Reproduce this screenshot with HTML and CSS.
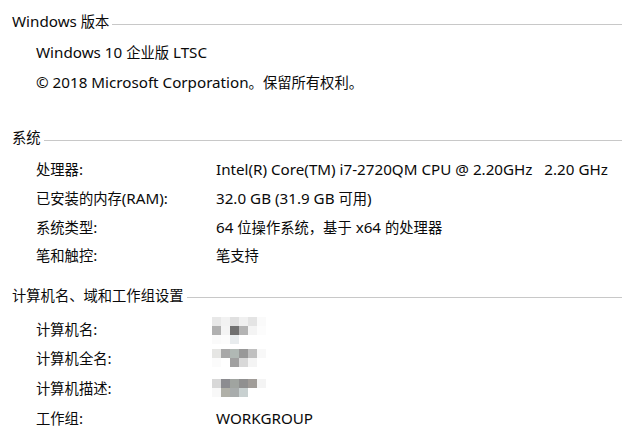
FILE: index.html
```html
<!DOCTYPE html>
<html lang="zh-CN">
<head>
<meta charset="utf-8">
<title>系统</title>
<link rel="stylesheet" href="styles.css">
</head>
<body>
<main class="page">
  <section class="group g1">
    <div class="group-head"><span class="group-title">Windows <span class="c">版本</span></span><span class="rule"></span></div>
    <div class="rows">
      <div class="row"><span class="label wide">Windows 10 <span class="c">企业版</span> LTSC</span></div>
      <div class="row"><span class="label wide">© 2018 Microsoft Corporation<span class="c">。保留所有权利。</span></span></div>
    </div>
  </section>
  <section class="group g2">
    <div class="group-head"><span class="group-title"><span class="c">系统</span></span><span class="rule"></span></div>
    <div class="rows">
      <div class="row"><span class="label"><span class="c">处理器</span>:</span><span class="value">Intel(R) Core(TM) i7-2720QM CPU @ 2.20GHz&nbsp;&nbsp;&nbsp;2.20 GHz</span></div>
      <div class="row"><span class="label"><span class="c">已安装的内存</span>(RAM):</span><span class="value">32.0 GB (31.9 GB <span class="c">可用</span>)</span></div>
      <div class="row"><span class="label"><span class="c">系统类型</span>:</span><span class="value">64 <span class="c">位操作系统，基于</span> x64 <span class="c">的处理器</span></span></div>
      <div class="row"><span class="label"><span class="c">笔和触控</span>:</span><span class="value"><span class="c">笔支持</span></span></div>
    </div>
  </section>
  <section class="group g3">
    <div class="group-head"><span class="group-title"><span class="c">计算机名、域和工作组设置</span></span><span class="rule"></span></div>
    <div class="rows">
      <div class="row"><span class="label"><span class="c">计算机名</span>:</span><span class="value">
        <svg class="mosaic m1" width="54" height="27" viewBox="0 0 6 3" shape-rendering="crispEdges">
          <rect x="0" y="0" width="1" height="1" fill="#e8e8e8"/><rect x="1" y="0" width="1" height="1" fill="#f2f2f2"/><rect x="2" y="0" width="1" height="1" fill="#e0e0e0"/><rect x="3" y="0" width="1" height="1" fill="#f0f0f0"/><rect x="4" y="0" width="1" height="1" fill="#e4e4e4"/><rect x="5" y="0" width="1" height="1" fill="#fafafa"/>
          <rect x="0" y="1" width="1" height="1" fill="#b0b0b0"/><rect x="1" y="1" width="1" height="1" fill="#f4f4f4"/><rect x="2" y="1" width="1" height="1" fill="#707070"/><rect x="3" y="1" width="1" height="1" fill="#b4b4b4"/><rect x="4" y="1" width="1" height="1" fill="#f4f4f4"/><rect x="5" y="1" width="1" height="1" fill="#fcfcfc"/>
          <rect x="0" y="2" width="1" height="1" fill="#fafafa"/><rect x="1" y="2" width="1" height="1" fill="#fcfcfc"/><rect x="2" y="2" width="1" height="1" fill="#e8ecee"/>
        </svg></span></div>
      <div class="row"><span class="label"><span class="c">计算机全名</span>:</span><span class="value">
        <svg class="mosaic m2" width="54" height="18" viewBox="0 0 6 2" shape-rendering="crispEdges">
          <rect x="0" y="0" width="1" height="1" fill="#e6e6e4"/><rect x="1" y="0" width="1" height="1" fill="#a8a8a8"/><rect x="2" y="0" width="1" height="1" fill="#b0b8b4"/><rect x="3" y="0" width="1" height="1" fill="#989898"/><rect x="4" y="0" width="1" height="1" fill="#c0c0c0"/><rect x="5" y="0" width="1" height="1" fill="#f8f8f8"/>
          <rect x="0" y="1" width="1" height="1" fill="#fbfbfb"/><rect x="2" y="1" width="1" height="1" fill="#a0a0a0"/><rect x="3" y="1" width="1" height="1" fill="#d8d8d8"/><rect x="4" y="1" width="1" height="1" fill="#f4f4f4"/>
        </svg></span></div>
      <div class="row"><span class="label"><span class="c">计算机描述</span>:</span><span class="value">
        <svg class="mosaic m3" width="54" height="18" viewBox="0 0 6 2" shape-rendering="crispEdges">
          <rect x="0" y="0" width="1" height="1" fill="#d8d8d8"/><rect x="1" y="0" width="1" height="1" fill="#8c8c90"/><rect x="2" y="0" width="1" height="1" fill="#a0a4a0"/><rect x="3" y="0" width="1" height="1" fill="#909090"/><rect x="4" y="0" width="1" height="1" fill="#a09c98"/><rect x="5" y="0" width="1" height="1" fill="#f4f4f4"/>
          <rect x="0" y="1" width="1" height="1" fill="#f8f8f8"/><rect x="1" y="1" width="1" height="1" fill="#b0b0a8"/><rect x="2" y="1" width="1" height="1" fill="#a8acac"/><rect x="3" y="1" width="1" height="1" fill="#c8d0d0"/>
        </svg></span></div>
      <div class="row"><span class="label"><span class="c">工作组</span>:</span><span class="value">WORKGROUP</span></div>
    </div>
  </section>
</main>
</body>
</html>
```
FILE: styles.css
```css
html, body {
  margin: 0;
  padding: 0;
  background: #ffffff;
}
body {
  font-family: "Noto Sans", "Noto Sans CJK SC", sans-serif;
  font-size: 15.2px;
  color: #0a0a0a;
  width: 622px;
  height: 435px;
  overflow: hidden;
}
.c {
  font-family: "Noto Sans CJK SC", sans-serif;
  font-size: 14.3px;
}
.page {
  padding: 11px 0 0 12px;
}
.group-head {
  display: flex;
  align-items: center;
  height: 20px;
  line-height: 20px;
}
.group-title {
  white-space: nowrap;
  padding-right: 3px;
}
.rule {
  flex: 1;
  border-top: 1px solid #c8c8c8;
  margin-top: 6px;
}
.rows {
  padding-left: 24px;
}
.row {
  display: flex;
  align-items: center;
  height: 30px;
  line-height: 20px;
  white-space: nowrap;
}
.label {
  width: 180px;
  flex: none;
}
.label.wide {
  width: auto;
}
.value {
  display: flex;
  align-items: center;
  white-space: pre;
}
.g1 .rows { padding-top: 6px; }
.g2 { margin-top: 30px; }
.g2 .rows { padding-top: 8px; }
.g2 .row { height: 28.7px; }
.g3 { margin-top: 15px; }
.g3 .rows { padding-top: 9px; }
.g3 .row { height: 29.7px; }
.mosaic { display: block; }
.m1 { margin-top: 4px; margin-left: -4px; }
.m2 { margin-left: -4px; }
.m3 { margin-left: -4px; }
```
